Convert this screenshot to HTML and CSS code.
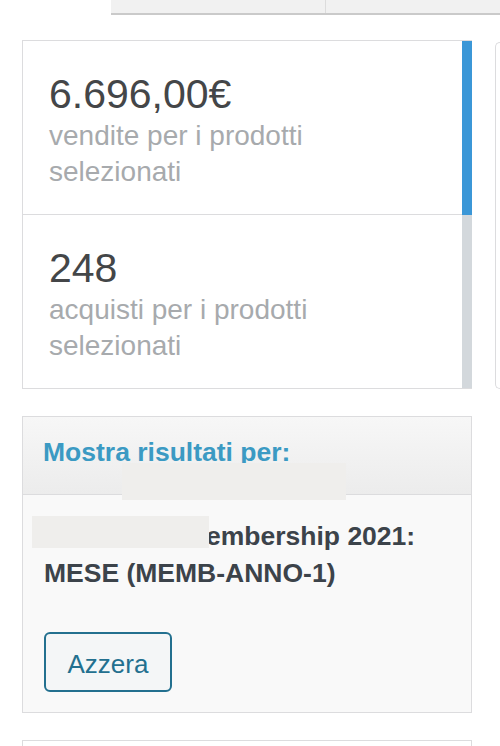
FILE: index.html
```html
<!DOCTYPE html>
<html lang="it">
<head>
<meta charset="utf-8">
<title>Report</title>
<link rel="stylesheet" href="styles.css">
</head>
<body>
<div class="topbar">
  <div class="tab tab-first"></div>
  <div class="tab"></div>
</div>
<div class="row">
  <div class="stats">
    <div class="cards">
      <div class="card card-first">
        <div class="value">6.696,00€</div>
        <div class="label">vendite per i prodotti selezionati</div>
      </div>
      <div class="card">
        <div class="value">248</div>
        <div class="label">acquisti per i prodotti selezionati</div>
      </div>
    </div>
    <div class="scrollbar">
      <div class="thumb"></div>
      <div class="track"></div>
    </div>
  </div>
  <div class="side"></div>
</div>
<div class="section">
  <div class="section-head">
    <h3 class="section-title">Mostra risultati per:</h3>
  </div>
  <div class="section-body">
    <p class="product"><span class="redact-name"></span>embership 2021:<br>MESE (MEMB-ANNO-1)</p>
    <button class="button" type="button">Azzera</button>
  </div>
  <div class="redact-head"></div>
</div>
<div class="section section-next"></div>
</body>
</html>
```
FILE: styles.css
```css
html, body {
  margin: 0;
  padding: 0;
  overflow: hidden;
  background: #ffffff;
}
body {
  width: 500px;
  font-family: "Liberation Sans", Arial, sans-serif;
}
.topbar {
  display: flex;
  margin-left: 111px;
  height: 13px;
  background: #f1f1f1;
  border-bottom: 2px solid #cacaca;
}
.tab {
  flex: 1;
}
.tab-first {
  flex: 0 0 214px;
  border-right: 1px solid #dcdcdc;
}
.row {
  display: flex;
  gap: 23px;
  margin-top: 25px;
  padding-left: 22px;
}
.stats {
  flex: 0 0 450px;
  display: flex;
  border: 1px solid #dcdcde;
  border-right: none;
  box-sizing: border-box;
  height: 349px;
}
.cards {
  flex: 1;
  display: flex;
  flex-direction: column;
}
.card {
  height: 173px;
  box-sizing: border-box;
  padding: 30px 20px 0 26px;
}
.card-first {
  height: 174px;
  border-bottom: 1px solid #dcdcde;
}
.value {
  font-size: 41px;
  line-height: 46px;
  color: #444648;
}
.label {
  max-width: 300px;
  margin-top: 1px;
  font-size: 28px;
  line-height: 36px;
  color: #a7aaad;
}
.scrollbar {
  flex: 0 0 10px;
  display: flex;
  flex-direction: column;
}
.thumb {
  height: 174px;
  background: #3b97d7;
}
.track {
  flex: 1;
  background: #d3d8dc;
}
.side {
  flex: 1;
  margin-top: 2px;
  height: 347px;
  box-sizing: border-box;
  border: 1px solid #dcdcde;
  border-right: none;
  border-radius: 5px 0 0 5px;
}
.section {
  position: relative;
  width: 450px;
  box-sizing: border-box;
  margin: 27px 0 0 22px;
  border: 1px solid #dcdcde;
}
.section-head {
  height: 78px;
  box-sizing: border-box;
  padding: 20px 20px 0 20px;
  background: linear-gradient(#f7f7f7, #ececec);
  border-bottom: 1px solid #dcdcde;
}
.section-title {
  margin: 0;
  font-size: 26.5px;
  line-height: 30px;
  font-weight: bold;
  color: #3b9ac3;
}
.section-body {
  padding: 23px 21px 20px 21px;
  background: #f9f9f9;
}
.product {
  margin: 0;
  font-size: 26.5px;
  line-height: 37px;
  font-weight: bold;
  color: #3c434a;
}
.redact-name {
  position: relative;
  z-index: 1;
  display: inline-block;
  width: 177px;
  height: 32px;
  margin: -3px -3px 0 -12px;
  vertical-align: -3px;
  background: #efeeec;
}
.button {
  display: block;
  margin-top: 40px;
  width: 128px;
  height: 60px;
  box-sizing: border-box;
  padding: 3px 0 0 0;
  border: 2px solid #23708f;
  border-radius: 6px;
  background: #f4f6f7;
  color: #23708f;
  font-family: "Liberation Sans", Arial, sans-serif;
  font-size: 26px;
  line-height: 52px;
  text-align: center;
}
.redact-head {
  position: absolute;
  left: 99px;
  top: 46px;
  width: 224px;
  height: 37px;
  background: #efeeec;
}
.section-next {
  height: 40px;
  background: #ffffff;
}
```
